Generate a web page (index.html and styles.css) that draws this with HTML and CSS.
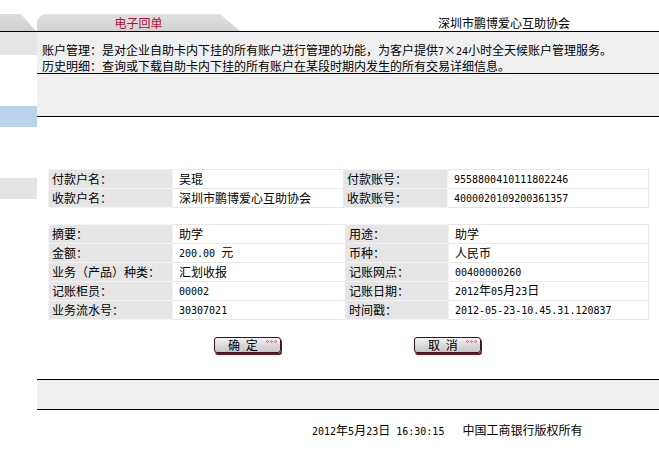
FILE: index.html
```html
<!DOCTYPE html>
<html lang="zh-CN">
<head>
<meta charset="utf-8">
<title>电子回单</title>
<link rel="stylesheet" href="styles.css">
</head>
<body>
<div class="header">
  <div class="tab-left"></div>
  <div class="tab-active">电子回单</div>
  <div class="org">深圳市鹏博爱心互助协会</div>
</div>
<div class="page">
  <div class="sidebar">
    <div class="side-grey"></div>
    <div class="side-blue"></div>
    <div class="side-grey2"></div>
  </div>
  <div class="main">
    <div class="info">
      <div>账户管理：是对企业自助卡内下挂的所有账户进行管理的功能，为客户提供<span class="n">7</span>×<span class="n">24</span>小时全天候账户管理服务。</div>
      <div>历史明细：查询或下载自助卡内下挂的所有账户在某段时期内发生的所有交易详细信息。</div>
    </div>
    <div class="blank"></div>

    <table class="grid grid1">
      <colgroup><col class="c1"><col class="c2"><col class="c3"><col class="c4"></colgroup>
      <tr>
        <td class="lbl">付款户名：</td>
        <td class="val">吴琨</td>
        <td class="lbl">付款账号：</td>
        <td class="val"><span class="n">9558800410111802246</span></td>
      </tr>
      <tr>
        <td class="lbl">收款户名：</td>
        <td class="val">深圳市鹏博爱心互助协会</td>
        <td class="lbl">收款账号：</td>
        <td class="val"><span class="n">4000020109200361357</span></td>
      </tr>
    </table>

    <table class="grid grid2">
      <colgroup><col class="c1"><col class="c2b"><col class="c3b"><col class="c4b"></colgroup>
      <tr>
        <td class="lbl">摘要：</td>
        <td class="val">助学</td>
        <td class="lbl">用途：</td>
        <td class="val">助学</td>
      </tr>
      <tr>
        <td class="lbl">金额：</td>
        <td class="val"><span class="n">200.00 </span>元</td>
        <td class="lbl">币种：</td>
        <td class="val">人民币</td>
      </tr>
      <tr>
        <td class="lbl">业务（产品）种类：</td>
        <td class="val">汇划收报</td>
        <td class="lbl">记账网点：</td>
        <td class="val"><span class="n">00400000260</span></td>
      </tr>
      <tr>
        <td class="lbl">记账柜员：</td>
        <td class="val"><span class="n">00002</span></td>
        <td class="lbl">记账日期：</td>
        <td class="val"><span class="n">2012</span>年<span class="n">05</span>月<span class="n">23</span>日</td>
      </tr>
      <tr>
        <td class="lbl">业务流水号：</td>
        <td class="val"><span class="n">30307021</span></td>
        <td class="lbl">时间戳：</td>
        <td class="val"><span class="n">2012-05-23-10.45.31.120837</span></td>
      </tr>
    </table>

    <div class="buttons">
      <div class="btn"><span class="btn-text">确 定</span><span class="dots"><i></i><i></i><i></i></span></div>
      <div class="btn"><span class="btn-text">取 消</span><span class="dots"><i></i><i></i><i></i></span></div>
    </div>

    <div class="bottom-bar"></div>
    <div class="footer"><span class="n">2012</span>年<span class="n">5</span>月<span class="n">23</span>日<span class="n"> 16:30:15&nbsp;&nbsp;&nbsp;</span>中国工商银行版权所有</div>
  </div>
</div>
</body>
</html>
```
FILE: styles.css
```css
html, body {
  margin: 0;
  padding: 0;
  background: #fff;
}
body {
  font-family: "Noto Sans CJK SC", "Noto Sans", sans-serif;
  font-size: 12px;
  color: #000;
}
.n {
  font-family: "DejaVu Sans Mono", "Liberation Mono", monospace;
  font-size: 10px;
}

/* header */
.header {
  height: 31px;
  display: flex;
  align-items: flex-end;
  border-bottom: 1px solid #000;
}
.tab-left {
  width: 37px;
  height: 17px;
  background: linear-gradient(#dedede, #cfcfcf);
  clip-path: polygon(0 0, 21px 0, 36px 100%, 0 100%);
}
.tab-active {
  width: 203px;
  height: 17px;
  line-height: 17px;
  text-align: center;
  color: #b0143c;
  background: linear-gradient(#e0e0e0, #d2d2d2);
  border-top-left-radius: 9px;
  clip-path: polygon(0 0, 183px 0, 203px 100%, 0 100%);
}
.org {
  margin-left: auto;
  margin-right: 89px;
  line-height: 17px;
}

/* page body */
.page {
  display: flex;
}
.sidebar {
  width: 37px;
  flex: none;
  display: flex;
  flex-direction: column;
}
.side-grey {
  height: 23px;
  background: #e6e6e6;
}
.side-blue {
  height: 21px;
  margin-top: 51px;
  background: #b8d3ea;
}
.side-grey2 {
  height: 21px;
  margin-top: 51px;
  background: #e4e4e4;
}
.main {
  flex: 1;
  min-width: 0;
}
.info {
  height: 42px;
  box-sizing: border-box;
  padding: 11px 0 0 5px;
  line-height: 14px;
  background: #f0f0f0;
  border-bottom: 1px solid #000;
  white-space: nowrap;
}
.blank {
  height: 42px;
  background: #f0f0f0;
  border-bottom: 1px solid #000;
}

/* tables */
.grid {
  border-collapse: collapse;
  width: 600px;
  margin-left: 11px;
  table-layout: fixed;
}
.grid1 {
  margin-top: 52px;
}
.grid2 {
  margin-top: 16px;
}
.grid td {
  box-sizing: border-box;
  border: 1px solid #e8e8e8;
  height: 19px;
  padding: 0 0 0 3px;
  line-height: 16px;
  white-space: nowrap;
  overflow: hidden;
}
.grid td.lbl {
  background: #e5e5e5;
  border-color: #f3f3f3;
}
.grid td.val {
  padding-left: 6px;
  background: #fff;
}
.c1 { width: 124px; }
.c2 { width: 171px; }
.c3 { width: 104px; }
.c4 { width: 201px; }
.c2b { width: 173px; }
.c3b { width: 103px; }
.c4b { width: 200px; }

/* buttons */
.buttons {
  display: flex;
  justify-content: center;
  gap: 133px;
  margin-top: 17px;
  padding-right: 1px;
}
.btn {
  width: 67px;
  height: 16px;
  box-sizing: border-box;
  border: 1px solid #3a1515;
  border-radius: 3px;
  box-shadow: 1px 2px 0 #7e1218;
  background: linear-gradient(#f4f4f4, #d6d6d6 60%, #c8c8c8);
  display: flex;
  align-items: flex-start;
  padding-left: 13px;
}
.btn-text {
  line-height: 14px;
  word-spacing: 3px;
}
.dots {
  display: flex;
  gap: 1px;
  margin-left: auto;
  margin-right: 3px;
  margin-top: 2px;
}
.dots i {
  width: 3px;
  height: 3px;
  box-sizing: border-box;
  border: 1px solid #d45a6a;
  border-radius: 50%;
}

/* bottom */
.bottom-bar {
  margin-top: 26px;
  height: 29px;
  background: #f0f0f0;
  border-top: 1px solid #000;
  border-bottom: 1px solid #000;
}
.footer {
  margin-top: 13px;
  padding-left: 275px;
  line-height: 13px;
  white-space: nowrap;
}
```
